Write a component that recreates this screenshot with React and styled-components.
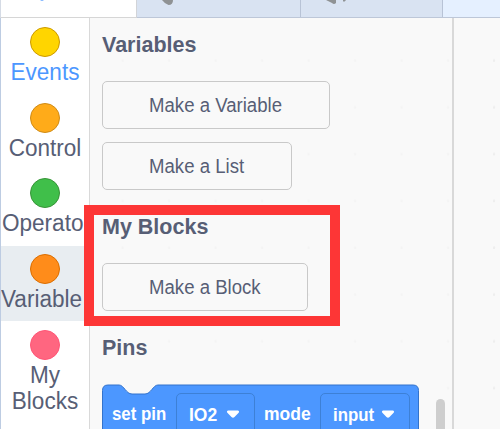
import React from "react";
import styled, { createGlobalStyle } from "styled-components";

const Global = createGlobalStyle`
  * { box-sizing: border-box; }
  body { margin: 0; overflow: hidden; }
`;

const Editor = styled.div`
  position: relative;
  width: 500px;
  height: 429px;
  overflow: hidden;
  display: flex;
  flex-direction: column;
  background: #f9f9f9;
  color: #575e75;
  font-family: "Liberation Sans", Arial, sans-serif;
`;

const TabBar = styled.div`
  flex: none;
  display: flex;
  height: 18px;
  background: #e5f0ff;
  border-bottom: 1px solid #bdc7d8;
`;

const Tab = styled.div`
  width: ${(p) => p.$width}px;
  height: ${(p) => (p.$active ? 18 : 17)}px;
  background: ${(p) => (p.$active ? "#ffffff" : "#d9e3f2")};
  border-right: 1px solid ${(p) => (p.$active ? "#d2d4d8" : "#b8c3d6")};
  border-bottom: ${(p) => (p.$active ? "1px solid #d6d6d6" : "none")};
  border-left: ${(p) => (p.$active ? "1px solid #d5dbe5" : "none")};

  svg { display: block; }
`;

const Body = styled.div`
  flex: 1;
  display: flex;
  min-height: 0;
`;

const Sidebar = styled.nav`
  flex: none;
  width: 90px;
  background: #fff;
  border-left: 1px solid #bdcce2;
  border-right: 1px solid #d9d9d9;
`;

const Category = styled.div`
  display: flex;
  flex-direction: column;
  align-items: center;
  height: ${(p) => p.$height}px;
  padding-top: ${(p) => p.$top}px;
  background: ${(p) => (p.$selected ? "#e8edf1" : "transparent")};
  color: ${(p) => (p.$highlight ? "#4c97ff" : "#575e75")};
`;

const Dot = styled.span`
  flex: none;
  width: 30px;
  height: 30px;
  border-radius: 50%;
  background: ${(p) => p.$fill};
  border: 1px solid ${(p) => p.$edge};
`;

const CategoryName = styled.span`
  width: 88px;
  padding-left: ${(p) => p.$indent || 0}px;
  font-size: 23px;
  line-height: 26px;
  margin-top: 2px;
  text-align: ${(p) => (p.$cut ? "left" : "center")};
  transform: scaleX(0.98);
  transform-origin: ${(p) => (p.$cut ? "left" : "center")};
`;

const Flyout = styled.section`
  flex: none;
  width: 364px;
  display: flex;
  flex-direction: column;
  align-items: flex-start;
  padding: 14px 0 0 12px;
  border-right: 2px solid #d9d9d9;
  background: radial-gradient(circle at 32.5px 42.5px, #f4f4f4 1px, transparent 1.5px) 0 0 / 46.5px 46.8px #f9f9f9;
`;

const Workspace = styled.main`
  flex: 1;
  background: radial-gradient(circle at 40.5px 42.5px, #eeeeee 1px, transparent 1.6px) 0 0 / 46.5px 46.8px #f9f9f9;
`;

const Heading = styled.h2`
  margin: ${(p) => p.$gap || 0}px 0 0;
  height: 26px;
  font-size: 21.5px;
  font-weight: 700;
  line-height: 26px;
`;

const FlyoutButton = styled.button`
  display: block;
  width: ${(p) => p.$width}px;
  height: 48px;
  margin: ${(p) => p.$gap}px 0 0;
  padding: 0 0 0 46px;
  border: 1px solid #c9c9c9;
  border-radius: 5px;
  background: #f9f9f9;
  color: #575e75;
  font: 20px/46px "Liberation Sans", Arial, sans-serif;
  text-align: left;
  white-space: nowrap;
`;

const Condensed = styled.span`
  display: inline-block;
  transform: scaleX(${(p) => p.$scale});
  transform-origin: left center;
`;

const PinBlock = styled.div`
  display: grid;
  width: 318px;
  height: 60px;
  margin-top: 23px;

  > * { grid-area: 1 / 1; }
  > svg { display: block; }
`;

const BlockRow = styled.div`
  display: grid;
  grid-template-columns: 64px 79px 65px 90px;
  height: 50px;
  padding: 9px 0 0 10px;
  color: #fff;
  font-size: 19px;
  font-weight: 700;
  line-height: 41px;
  white-space: nowrap;
`;

const BlockWord = styled.span`
  padding-left: ${(p) => p.$indent}px;
`;

const Dropdown = styled.span`
  display: flex;
  align-items: center;
  justify-content: space-between;
  height: 43px;
  padding: 0 14px 1px 12px;
  border: 1px solid #3d80d6;
  border-radius: 5px;
`;

const DropdownValue = styled.span`
  width: ${(p) => p.$width}px;
`;

const Scrollbar = styled.div`
  position: absolute;
  left: 436px;
  top: 399px;
  width: 9px;
  height: 60px;
  border-radius: 5px;
  background: #cecece;
`;

const Marker = styled.div`
  position: absolute;
  left: 84px;
  top: 205px;
  width: 256px;
  height: 121px;
  border: 10px solid #fd3636;
`;

const categories = [
  { name: "Events", fill: "#ffd500", edge: "#cc9900", height: 76, top: 9, highlight: true },
  { name: "Control", fill: "#ffab19", edge: "#cf8b17", height: 76, top: 9 },
  { name: "Operato", fill: "#40bf4a", edge: "#389438", height: 76, top: 8, cut: true, indent: 1 },
  { name: "Variable", fill: "#ff8c1a", edge: "#db6e00", height: 75, top: 8, cut: true, selected: true },
  { name: "My Blocks", fill: "#ff6680", edge: "#ff5576", height: 108, top: 9 },
];

const Caret = () => (
  <svg width="14" height="10" viewBox="0 0 14 10">
    <path d="M2 1.500H12Q14 2.500 12.400 4L8.500 8Q7 9.300 5.500 8L1.600 4Q0 2.500 2 1.500Z" fill="#fff" />
  </svg>
);

export default function App() {
  return (
    <>
      <Global />
      <Editor>
        <TabBar>
          <Tab $active $width={137}>
            <svg width="60" height="17"><path d="M39 0H43Q41 1.400 39 0Z" fill="#4c97ff" /></svg>
          </Tab>
          <Tab $width={164}>
            <svg width="60" height="17"><path d="M25 0H36Q36 5 31.500 5Q28 4 25 0Z" fill="#8f9294" /></svg>
          </Tab>
          <Tab $width={142}>
            <svg width="70" height="17">
              <path d="M25 0H35V3Q33 5 31 3Z" fill="#8f9294" />
              <path d="M42 0H45Q43 3 42 1Z" fill="#8f9294" />
            </svg>
          </Tab>
        </TabBar>
        <Body>
          <Sidebar>
            {categories.map((c) => (
              <Category key={c.name} $height={c.height} $top={c.top} $selected={c.selected} $highlight={c.highlight}>
                <Dot $fill={c.fill} $edge={c.edge} />
                <CategoryName $cut={c.cut} $indent={c.indent}>{c.name}</CategoryName>
              </Category>
            ))}
          </Sidebar>
          <Flyout>
            <Heading>Variables</Heading>
            <FlyoutButton $width={228} $gap={23}><Condensed $scale={0.93}>Make a Variable</Condensed></FlyoutButton>
            <FlyoutButton $width={190} $gap={13}><Condensed $scale={0.93}>Make a List</Condensed></FlyoutButton>
            <Heading $gap={24}>My Blocks</Heading>
            <FlyoutButton $width={206} $gap={23}><Condensed $scale={0.93}>Make a Block</Condensed></FlyoutButton>
            <Heading $gap={24}>Pins</Heading>
            <PinBlock>
              <svg width="318" height="60">
                <path d="M.5 60V6.500Q.5 1 6 1H17C22 1 24 10 30 10H43C49 10 51 1 56 1H311Q316.500 1 316.500 6.500V60Z" fill="#4c97ff" stroke="#3373cc" />
              </svg>
              <BlockRow>
                <BlockWord $indent={0}><Condensed $scale={0.885}>set pin</Condensed></BlockWord>
                <Dropdown><DropdownValue $width={32}><Condensed $scale={0.92}>IO2</Condensed></DropdownValue><Caret /></Dropdown>
                <BlockWord $indent={9}><Condensed $scale={0.92}>mode</Condensed></BlockWord>
                <Dropdown><DropdownValue $width={40}><Condensed $scale={0.885}>input</Condensed></DropdownValue><Caret /></Dropdown>
              </BlockRow>
            </PinBlock>
          </Flyout>
          <Workspace />
        </Body>
        <Scrollbar />
        <Marker />
      </Editor>
    </>
  );
}
